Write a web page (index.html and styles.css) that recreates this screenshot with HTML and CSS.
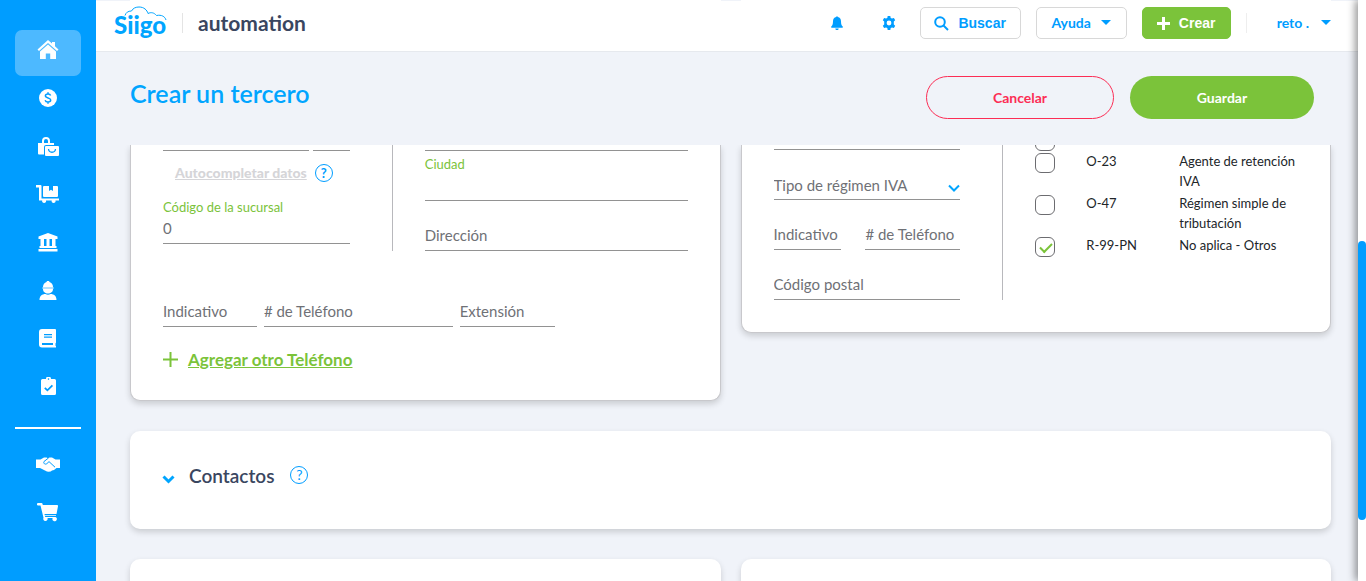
FILE: index.html
```html
<!DOCTYPE html>
<html lang="es">
<head>
<meta charset="utf-8">
<title>Crear un tercero</title>
<link rel="stylesheet" href="styles.css">
</head>
<body>
<nav class="sidebar" aria-label="Principal">
  <a class="side-link active" href="#" aria-label="Inicio"><svg width="22" height="20" viewBox="0 0 22 20"><path d="M11 0 0.500 9.500 2 11 11 3l9 8 1.500-1.500L18 6.300V2h-3v1.600z"/><path d="M11 4.500 3 11.500V19h5.800v-5.500h4.400V19H19v-7.500z"/></svg></a>
  <a class="side-link" href="#" aria-label="Ventas"><svg width="18" height="18" viewBox="0 0 18 18"><circle cx="9" cy="9" r="9"/><path class="cut-line" stroke-width="1.500" d="M11.600 6.400C11.200 5.200 10.200 4.900 9 4.900c-1.500 0-2.600.7-2.600 1.900 0 2.800 5.300 1.500 5.300 4.200 0 1.300-1.300 2-2.700 2-1.400 0-2.500-.5-2.900-1.700M9 3.200v1.700M9 13v1.800"/></svg></a>
  <a class="side-link" href="#" aria-label="Compras"><svg width="21" height="19" viewBox="0 0 21 19"><path d="M0 6h4V4a4 4 0 0 1 8 0v2h4v2H8a2 2 0 0 0-2 2v7.500H1A1 1 0 0 1 0 16.500zM6 6h4V4a2 2 0 0 0-4 0z"/><path d="M8 9h12a1 1 0 0 1 1 1v8a1 1 0 0 1-1 1H8a1 1 0 0 1-1-1v-8a1 1 0 0 1 1-1z"/><path class="cut-line" stroke-width="1.300" d="M10.500 12c.4 4.300 6.600 4.300 7 0"/></svg></a>
  <a class="side-link" href="#" aria-label="Inventario"><svg width="24" height="19" viewBox="0 0 24 19"><path d="M0 0h4.500a1 1 0 0 1 1 1v12.500H23v2h-3.500a2 2 0 1 1-3.800 0H10a2 2 0 1 1-3.800 0H3V2.500H0z"/><path d="M8 1h5v5l2-1.300L17 6V1h4a1 1 0 0 1 1 1v9a1 1 0 0 1-1 1H8a1 1 0 0 1-1-1V2a1 1 0 0 1 1-1z"/></svg></a>
  <a class="side-link" href="#" aria-label="Bancos"><svg width="20" height="19" viewBox="0 0 20 19"><path d="M10 0 19.500 3.500V6H.5V3.500zM2.500 6H6v7h2.500V6h3v7H14V6h3.500v7h1v2h-17v-2h1zM.500 16h19v2.500H.500z"/></svg></a>
  <a class="side-link" href="#" aria-label="Nómina"><svg width="18" height="19" viewBox="0 0 18 19"><path d="M4 6C4 3.500 5.500 1.500 7.500 1L8 0h2l.5 1c2 .5 3.500 2.500 3.500 5zM4 8h10c0 2.800-2.200 4.500-5 4.500S4 10.800 4 8zM.500 19c0-4 2.500-6 6-6 1.500 1 3.500 1 5 0 3.500 0 6 2 6 6z"/><path opacity=".7" d="M3.500 6h11v2h-11z"/></svg></a>
  <a class="side-link" href="#" aria-label="Contabilidad"><svg width="18" height="19" viewBox="0 0 18 19"><path fill-rule="evenodd" d="M3 0h13a1 1 0 0 1 1 1v12.500a1 1 0 0 1-.5.8v2.400c.3.100.5.400.5.700v1H3a3 3 0 0 1-3-3V3a3 3 0 0 1 3-3zM5 5v1.200h8V5zm0 2.500v1.200h8V7.500zM3 14v2h11v-2z"/></svg></a>
  <a class="side-link" href="#" aria-label="Reportes"><svg width="15" height="19" viewBox="0 0 15 19"><path fill-rule="evenodd" d="M1.500 2H5a2.500 2.500 0 0 1 5 0h3.500A1.500 1.500 0 0 1 15 3.500v13a1.500 1.500 0 0 1-1.500 1.500h-12A1.500 1.500 0 0 1 0 16.500v-13A1.500 1.500 0 0 1 1.500 2zM7.500 1.300a.8.800 0 1 0 0 1.600.8.800 0 0 0 0-1.600z"/><path class="cut-line" stroke-width="1.800" d="m3.800 10.800 2.600 2.500 5-5"/></svg></a>
  <hr class="side-rule">
  <a class="side-link" href="#" aria-label="Aliados"><svg width="24" height="15" viewBox="0 0 24 15"><path d="M0 2.500h4.500L8 .5h2.500l1.500.7L13.500.5H16l3.500 2H24V11h-3.500l-2.500 2-2 .4-1.300 1.100-2.200.3-1.500-.3-1.500-.8L6 12 4 11H0z"/><path class="cut-line" stroke-width="1" d="M12.500 1 8 4.500c-1 1.800 1.200 3.600 3 2L13 4.600l6 5.600"/></svg></a>
  <a class="side-link" href="#" aria-label="Tienda"><svg width="22" height="19" viewBox="0 0 22 19"><path d="M1 0h3.500a1 1 0 0 1 1 .8L5.800 2H20a1 1 0 0 1 1 1.200l-1.500 7.800H7.500l.3 1.200H19v.8H8l.2 1h10.300a2.200 2.200 0 1 1-2.800 1h-5.200a2.200 2.200 0 1 1-4-.2L3.500 2.500H1A1.200 1.200 0 0 1 1 0z"/></svg></a>
</nav>

<div class="page">
  <div class="peek" aria-hidden="true"><span></span><span></span></div>
  <header class="topbar">
    <a class="logo" href="#">Siigo<svg class="cloud" width="44" height="16" viewBox="0 0 44 16"><path d="M1 9.500C2 6.500 4 5 7.500 5 9 2 12 1 15 1c5 0 8 3 9 6.500 3-1.500 6-1 8.500 2 5-1 8.500 1 9.500 4.500"/></svg></a>
    <span class="company">automation</span>
    <div class="tools">
      <button class="tool-icon" aria-label="Notificaciones"><svg width="12" height="14" viewBox="0 0 12 14"><path d="M5.200 1a.8.800 0 0 1 1.600 0C9 1.500 10 3 10 5.200c0 3 .7 4.300 1.700 5.200.5.600.2 1.300-.5 1.300H.8c-.7 0-1-.7-.5-1.300C1.300 9.500 2 8.200 2 5.200 2 3 3 1.500 5.200 1zM4.300 12.400h3.400a1.700 1.700 0 0 1-3.400 0z"/></svg></button>
      <button class="tool-icon gear" aria-label="Configuración"><svg width="14" height="14" viewBox="0 0 14 14"><path fill-rule="evenodd" d="M5.700 0h2.600l.4 1.900 1.300.7 1.900-.6 1.300 2.200L11.800 5.600v2.800l1.400 1.400-1.300 2.200-1.900-.6-1.300.7L8.300 14H5.700l-.4-1.900L4 11.400l-1.900.6L.8 9.800l1.400-1.400V5.600L.8 4.200 2.100 2l1.900.6 1.300-.7zM7 4.600a2.400 2.400 0 1 0 0 4.800 2.400 2.400 0 0 0 0-4.800z"/></svg></button>
      <button class="btn search"><svg width="15" height="15" viewBox="0 0 15 15"><circle cx="6" cy="6" r="4.800"/><path d="m9.500 9.500 4.500 4.500"/></svg>Buscar</button>
      <button class="btn help">Ayuda<i class="caret"></i></button>
      <button class="btn create"><svg width="13" height="13" viewBox="0 0 13 13"><path d="M6.500 0v13M0 6.500h13"/></svg>Crear</button>
      <button class="user">reto .<i class="caret"></i></button>
    </div>
  </header>

  <div class="titlebar">
    <h1>Crear un tercero</h1>
    <div class="actions">
      <button class="pill cancel">Cancelar</button>
      <button class="pill save">Guardar</button>
    </div>
  </div>

  <main class="content">
    <section class="card form-card">
      <div class="cols">
        <div class="left-col">
          <div class="cut-row"><span class="cut-field"></span><span class="cut-field digit"></span></div>
          <div class="auto-row"><a class="auto-link" href="#">Autocompletar datos</a><button class="hint" aria-label="Ayuda sobre autocompletar">?</button></div>
          <label class="float-label" for="branch">Código de la sucursal</label>
          <input class="field value" id="branch" value="0">
        </div>
        <div>
          <div class="cut-row"><span class="cut-field"></span></div>
          <label class="float-label city-label" for="city">Ciudad</label>
          <input class="field city" id="city">
          <input class="field address" aria-label="Dirección" placeholder="Dirección">
        </div>
      </div>
      <div class="phones">
        <input class="field" aria-label="Indicativo" placeholder="Indicativo">
        <input class="field" aria-label="# de Teléfono" placeholder="# de Teléfono">
        <input class="field" aria-label="Extensión" placeholder="Extensión">
      </div>
      <button class="add-phone"><svg width="15" height="15" viewBox="0 0 15 15"><path d="M7.500 0v15M0 7.500h15"/></svg><span>Agregar otro Teléfono</span></button>
    </section>

    <section class="card form-card">
      <div class="cols">
        <div class="left-col tax-col">
          <div class="cut-row short"><span class="cut-field"></span></div>
          <div class="select-wrap">
            <select class="field" aria-label="Tipo de régimen IVA"><option>Tipo de régimen IVA</option></select>
            <svg width="12" height="8" viewBox="0 0 12 8"><path d="m1 1.500 5 5 5-5"/></svg>
          </div>
          <div class="pair">
            <input class="field" aria-label="Indicativo de facturación" placeholder="Indicativo">
            <input class="field" aria-label="Teléfono de facturación" placeholder="# de Teléfono">
          </div>
          <input class="field" aria-label="Código postal" placeholder="Código postal">
        </div>
        <div>
          <div class="cut-check"><input class="check" type="checkbox" aria-label="Responsabilidad anterior"></div>
          <table class="duties">
            <tr><td class="c-box"><input class="check" type="checkbox" id="o23"></td><td class="c-code"><label for="o23">O-23</label></td><td>Agente de retención IVA</td></tr>
            <tr><td class="c-box"><input class="check" type="checkbox" id="o47"></td><td class="c-code"><label for="o47">O-47</label></td><td>Régimen simple de tributación</td></tr>
            <tr><td class="c-box"><input class="check" type="checkbox" id="r99" checked></td><td class="c-code"><label for="r99">R-99-PN</label></td><td>No aplica - Otros</td></tr>
          </table>
        </div>
      </div>
    </section>

    <section class="card contacts">
      <svg class="chev" width="13" height="9" viewBox="0 0 13 9"><path d="m1.500 1.500 5 5 5-5"/></svg>
      <h2>Contactos</h2>
      <button class="hint thin" aria-label="Ayuda sobre contactos">?</button>
    </section>
    <section class="card next"></section>
    <section class="card next"></section>
  </main>
</div>
<div class="track"><div class="thumb"></div></div>
</body>
</html>
```
FILE: styles.css
```css
* { box-sizing: border-box; }
body {
  margin: 0;
  height: 100vh;
  display: flex;
  overflow: hidden;
  background: #f0f3f9;
  color: #3a4660;
  font-family: Lato, "Open Sans", sans-serif;
  font-size: 15px;
}
button, input, select { font: inherit; margin: 0; padding: 0; border: 0; background: none; color: inherit; }
svg { display: block; flex: none; }

/* Sidebar */
.sidebar { flex: none; width: 96px; padding: 30px 15px 0; background: #009dff; display: flex; flex-direction: column; }
.side-link { flex: none; height: 44px; margin-bottom: 4px; display: flex; align-items: center; justify-content: center; }
.side-link svg { fill: #fff; }
.side-link.active { height: 46px; margin-bottom: 0; padding-bottom: 6px; border-radius: 7px; background: #4db9ff; }
.cut-line { fill: none; stroke: #009dff; }
.side-rule { flex: none; width: 100%; height: 2px; margin: 15px 0 13px; border: 0; background: #fff; }

/* Top bar */
.page { flex: 1; min-width: 0; height: 100vh; overflow: hidden; display: flex; flex-direction: column; }
.peek { flex: none; height: 1px; padding: 0 27px 0 34px; display: grid; grid-template-columns: 1fr 1fr; gap: 20px; }
.peek span { background: #fff; }
.topbar { flex: none; height: 51px; padding: 0 27px 6px 18px; display: flex; align-items: center; background: #fff; border-bottom: 1px solid #e6e9ee; }
.logo { position: relative; width: 69px; height: 20px; border-right: 1px solid #e4e4e4; color: #00a5ff; font: 900 24px/24px Lato, sans-serif; text-decoration: none; }
.cloud { position: absolute; left: 10px; top: -7px; fill: none; stroke: #00a5ff; stroke-width: 1; }
.company { margin-left: 15px; padding-bottom: 2px; font-size: 21px; font-weight: 700; }
.tools { margin-left: auto; display: flex; align-items: center; color: #009dff; font-size: 14px; font-weight: 700; }
.tool-icon { width: 12px; height: 32px; display: flex; align-items: center; }
.tool-icon svg { fill: #009dff; }
.tool-icon.gear { width: 14px; margin: 0 24px 0 39px; }
.btn { height: 32px; border: 1px solid #d8d8d8; border-radius: 5px; display: flex; align-items: center; justify-content: center; }
.btn svg { fill: none; stroke: currentColor; stroke-width: 2; }
.search { width: 101px; gap: 9px; font-family: "Liberation Sans", Arial, sans-serif; }
.help { width: 91px; margin: 0 15px; padding-bottom: 2px; gap: 10px; }
.create { width: 89px; gap: 9px; background: #7bc33a; border-color: #7bc33a; color: #fff; font-family: "Liberation Sans", Arial, sans-serif; }
.btn.create svg { stroke-width: 3; }
.user { margin-left: 15px; padding: 0 0 2px 30px; height: 20px; border-left: 1px solid #eee; display: flex; align-items: center; gap: 12px; }
.caret { border: 5px solid transparent; border-top-color: #009dff; border-bottom: 0; }

/* Title */
.titlebar { flex: none; height: 93px; padding: 0 44px 2px 34px; display: flex; align-items: center; justify-content: space-between; }
h1 { margin: 0; padding-bottom: 9px; color: #00a5ff; font-size: 25px; font-weight: 600; }
.actions { display: flex; gap: 16px; }
.pill { width: 184px; height: 43px; border-radius: 22px; font-size: 14px; font-weight: 700; }
.cancel { width: 188px; border: 1px solid #fc2d55; color: #fc2d55; }
.save { background: #7bc33a; color: #fff; }

/* Cards */
.content { flex: 1; min-height: 0; overflow: hidden; padding: 0 27px 0 34px; display: grid; grid-template-columns: 1fr 1fr; column-gap: 20px; row-gap: 30px; align-items: start; align-content: start; }
.card { background: #fff; border-radius: 10px; box-shadow: 0 3px 6px rgba(0, 0, 0, .16); }
.form-card { padding: 0 32px 32px; border: 1px solid #c8c8cc; border-top: 0; border-radius: 0 0 10px 10px; }
.cols { display: grid; grid-template-columns: 230fr 263fr; gap: 32px; }
.left-col { height: 106px; padding-right: 42px; border-right: 1px solid #b8b8bc; }
.tax-col { height: 155px; }
.cut-row { display: flex; gap: 4px; height: 6px; }
.cut-row.short { height: 5px; }
.cut-field { flex: 1; border-bottom: 1px solid #929292; }
.cut-field.digit { flex: 0 0 37px; }
.auto-row { height: 44px; padding-left: 12px; display: flex; align-items: center; gap: 8px; }
.auto-link { padding-bottom: 2px; color: #d5d5d8; font-size: 14px; font-weight: 900; white-space: nowrap; }
.hint { flex: none; width: 18px; height: 18px; border: 1px solid #009dff; border-radius: 50%; color: #009dff; font-size: 13px; font-weight: 700; line-height: 16px; text-align: center; }
.float-label { display: block; height: 24px; color: #7bc33a; font-size: 13px; line-height: 24px; white-space: nowrap; }
.field { display: block; width: 100%; min-width: 0; height: 30px; padding-bottom: 2px; border-bottom: 1px solid #929292; border-radius: 0; color: #6f7176; font-size: 15px; outline: 0; }
.field::placeholder { color: #6f7176; opacity: 1; }
.field.value { height: 25px; padding-bottom: 6px; }
.city-label { height: 26px; line-height: 26px; }
.field.city { height: 24px; }
.address { margin-top: 20px; }
.phones { margin-top: 46px; padding-right: 133px; display: grid; grid-template-columns: 94fr 189fr 95fr; gap: 7px; }
.add-phone { height: 20px; margin-top: 22px; display: flex; align-items: center; gap: 10px; color: #7bc33a; font-size: 17px; font-weight: 700; text-decoration: underline; }
.form-card .add-phone { margin-bottom: -1px; }
.add-phone svg { stroke: #7bc33a; stroke-width: 2; }
.tax-col > .field { margin-top: 20px; }
.select-wrap { position: relative; margin-top: 20px; }
.select-wrap select { appearance: none; padding-bottom: 0; }
.select-wrap svg { position: absolute; right: 0; top: 14px; fill: none; stroke: #00a5ff; stroke-width: 2; pointer-events: none; }
.pair { margin-top: 20px; display: grid; grid-template-columns: 68fr 95fr; gap: 24px; }
.cut-check { height: 6px; overflow: hidden; display: flex; align-items: flex-end; }
.check { display: block; flex: none; appearance: none; width: 20px; height: 20px; border: 1px solid #6c6c70; border-radius: 6px; background: #fff; }
.check:checked::after { content: ""; display: block; width: 10px; height: 5px; margin: 5px 0 0 4px; border: solid #7bc33a; border-width: 0 0 2px 2px; transform: rotate(-45deg); }
.duties { width: 100%; border-collapse: collapse; color: #212529; font-size: 13px; line-height: 20px; }
.duties td { padding: 0 0 2px; vertical-align: top; }
.duties .c-box { width: 51px; padding-top: 2px; }
.duties .c-code { width: 93px; }

/* Contacts */
.contacts { grid-column: 1 / -1; height: 98px; padding: 0 32px 10px; display: flex; align-items: center; }
.chev { margin-top: 9px; fill: none; stroke: #00a5ff; stroke-width: 3; }
h2 { margin: 0 16px 0 14px; font-size: 19px; font-weight: 600; }
.hint.thin { font-size: 14px; font-weight: 400; }
.next { height: 120px; }

/* Scroll bar */
.track { position: relative; flex: none; width: 8px; height: 100vh; padding-top: 241px; background: #fff; box-shadow: -2px 0 8px rgba(0, 0, 0, .5); }
.thumb { height: 48vh; border-radius: 4px; background: #009dff; }
```
